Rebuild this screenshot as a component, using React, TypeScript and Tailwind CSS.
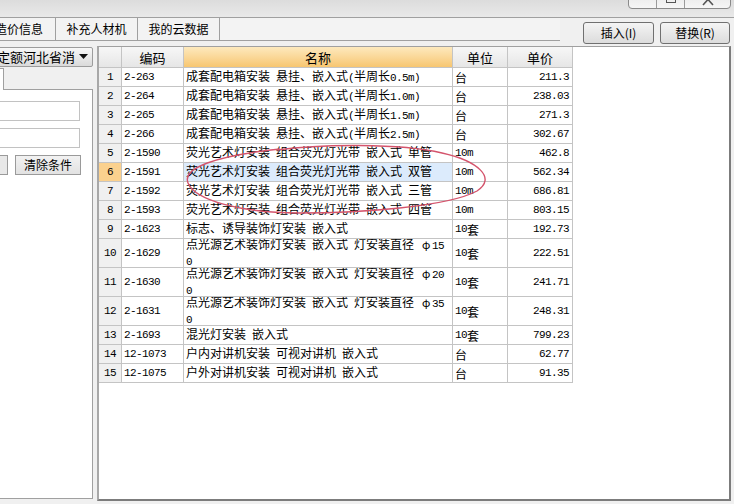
import React from "react";

type Row = {
  n: number;
  code: string;
  name: string[];
  unit: string;
  price: string;
};

const rows: Row[] = [
  { n: 1, code: "2-263", name: ["成套配电箱安装 悬挂、嵌入式(半周长0.5m)"], unit: "台", price: "211.3" },
  { n: 2, code: "2-264", name: ["成套配电箱安装 悬挂、嵌入式(半周长1.0m)"], unit: "台", price: "238.03" },
  { n: 3, code: "2-265", name: ["成套配电箱安装 悬挂、嵌入式(半周长1.5m)"], unit: "台", price: "271.3" },
  { n: 4, code: "2-266", name: ["成套配电箱安装 悬挂、嵌入式(半周长2.5m)"], unit: "台", price: "302.67" },
  { n: 5, code: "2-1590", name: ["荧光艺术灯安装 组合荧光灯光带 嵌入式 单管"], unit: "10m", price: "462.8" },
  { n: 6, code: "2-1591", name: ["荧光艺术灯安装 组合荧光灯光带 嵌入式 双管"], unit: "10m", price: "562.34" },
  { n: 7, code: "2-1592", name: ["荧光艺术灯安装 组合荧光灯光带 嵌入式 三管"], unit: "10m", price: "686.81" },
  { n: 8, code: "2-1593", name: ["荧光艺术灯安装 组合荧光灯光带 嵌入式 四管"], unit: "10m", price: "803.15" },
  { n: 9, code: "2-1623", name: ["标志、诱导装饰灯安装 嵌入式"], unit: "10套", price: "192.73" },
  { n: 10, code: "2-1629", name: ["点光源艺术装饰灯安装 嵌入式 灯安装直径 φ15", "0"], unit: "10套", price: "222.51" },
  { n: 11, code: "2-1630", name: ["点光源艺术装饰灯安装 嵌入式 灯安装直径 φ20", "0"], unit: "10套", price: "241.71" },
  { n: 12, code: "2-1631", name: ["点光源艺术装饰灯安装 嵌入式 灯安装直径 φ35", "0"], unit: "10套", price: "248.31" },
  { n: 13, code: "2-1693", name: ["混光灯安装 嵌入式"], unit: "10套", price: "799.23" },
  { n: 14, code: "12-1073", name: ["户内对讲机安装 可视对讲机 嵌入式"], unit: "台", price: "62.77" },
  { n: 15, code: "12-1075", name: ["户外对讲机安装 可视对讲机 嵌入式"], unit: "台", price: "91.35" },
];

const mono = "font-['Liberation_Mono',monospace] text-[11px] tracking-[-0.6px]";

// SimSun-like: half-width ascii at 6px, CJK at 12px
function Mixed({ text }: { text: string }) {
  const parts = text.split(/([\x20-\x7e]+|φ)/).filter(Boolean);
  return (
    <>
      {parts.map((p, i) =>
        p === "φ" ? (
          <span key={i} className="inline-block w-[12px] text-center text-[11px]">φ</span>
        ) : /^[\x20-\x7e]+$/.test(p) ? (
          <span key={i} className={`whitespace-pre ${mono}`}>{p}</span>
        ) : (
          <span key={i}>{p}</span>
        )
      )}
    </>
  );
}

function Grid() {
  const cell = "border-r border-b border-[#c4c4c4] flex items-center";
  const head = "h-[21px] border-r border-b border-[#c4c4c4] flex items-center justify-center text-[13px]";
  return (
    <div className="grid grid-cols-[23px_62px_269px_55px_65px] w-[474px] text-[12px] leading-[13px]">
      <div className={`${head} bg-gradient-to-b from-[#f7f7f7] to-[#e6e6e6]`}></div>
      <div className={`${head} bg-gradient-to-b from-[#f7f7f7] to-[#e6e6e6]`}>编码</div>
      <div className={`${head} bg-gradient-to-b from-[#fde9bd] to-[#f7c670]`}>名称</div>
      <div className={`${head} bg-gradient-to-b from-[#f7f7f7] to-[#e6e6e6]`}>单位</div>
      <div className={`${head} bg-gradient-to-b from-[#f7f7f7] to-[#e6e6e6]`}>单价</div>
      {rows.map((r) => {
        const h = r.name.length > 1 ? "h-[29px]" : "h-[19px]";
        const sel = r.n === 6;
        return (
          <React.Fragment key={r.n}>
            <div className={`${cell} ${h} justify-center ${mono} ${sel ? "bg-[#fbd18e]" : "bg-[#f0f0f0]"}`}>
              {r.n}
            </div>
            <div className={`${cell} ${h} pl-[2px] ${mono}`}>{r.code}</div>
            <div className={`${cell} ${h} pl-[2px] whitespace-nowrap overflow-hidden ${sel ? "bg-[#dcebfc]" : ""}`}>
              <div>
                {r.name.map((l, i) => (
                  <div key={i}>
                    <Mixed text={l} />
                  </div>
                ))}
              </div>
            </div>
            <div className={`${cell} ${h} pl-[2px]`}>
              <Mixed text={r.unit} />
            </div>
            <div className={`${cell} ${h} justify-end pr-[3px] ${mono}`}>{r.price}</div>
          </React.Fragment>
        );
      })}
    </div>
  );
}

export default function App() {
  return (
    <div className="relative w-[734px] h-[504px] overflow-hidden bg-[#f0f0f0] text-black font-['Noto_Sans_CJK_SC',sans-serif]">
      {/* window strip */}
      <div className="h-[18px] bg-gradient-to-b from-[#dcdcdc] to-[#e9e9e9] border-b border-[#a0a0a0]"></div>

      {/* window buttons */}
      <div className="absolute left-[628px] top-[-10px] w-[103px] h-[19px] flex border border-[#8a8a8a] rounded-b-[4px] overflow-hidden bg-gradient-to-b from-[#e6e6e6] to-[#f6f6f6]">
        <div className="w-[28px] border-r border-[#9a9a9a]"></div>
        <div className="w-[28px] border-r border-[#9a9a9a] flex justify-center">
          <div className="mt-[4px] w-[10px] h-[8px] border border-[#555] border-t-2"></div>
        </div>
        <div className="flex-1 flex justify-center">
          <svg width="16" height="17" viewBox="0 0 16 17">
            <path d="M3 3 L13 14 M13 3 L3 14" stroke="#555" strokeWidth="1.6" />
          </svg>
        </div>
      </div>

      {/* toolbar */}
      <div className="h-[28px] flex">
        <div className="flex h-[23px] w-[560px] border-b border-[#a0a0a0] text-[12px] bg-[#f3f3f3]">
          <div className="w-[56px] border-r border-[#a0a0a0] flex items-center overflow-hidden">
            <span className="ml-[-5px] whitespace-nowrap">造价信息</span>
          </div>
          <div className="w-[82px] border-r border-[#a0a0a0] flex items-center justify-center">补充人材机</div>
          <div className="w-[82px] border-r border-[#a0a0a0] flex items-center justify-center">我的云数据</div>
        </div>
        <div className="flex gap-[6px] ml-[23px] mt-[4px] text-[12px]">
          <button className="w-[71px] h-[22px] border border-[#707070] rounded-[3px] bg-gradient-to-b from-[#f4f4f4] to-[#dcdcdc] flex items-center justify-center">
            插入(I)
          </button>
          <button className="w-[70px] h-[22px] border border-[#707070] rounded-[3px] bg-gradient-to-b from-[#f4f4f4] to-[#dcdcdc] flex items-center justify-center">
            替换(R)
          </button>
        </div>
      </div>

      {/* main */}
      <div className="flex h-[458px]">
        <div className="w-[93px] flex flex-col pt-[1px]">
          <div className="h-[20px] w-[95px] ml-[-2px] border border-[#9c9c9c] rounded-[2px] bg-gradient-to-b from-[#f8f8f8] to-[#dadada] flex items-center overflow-hidden">
            <span className="flex-1 min-w-0 overflow-hidden whitespace-nowrap text-[13px] leading-[18px] ml-[-2px]">定额河北省消</span>
            <svg width="9" height="6" viewBox="0 0 9 6" className="mr-[4px] ml-[4px] shrink-0">
              <path d="M0 0 L9 0 L4.5 5 Z" fill="#111" />
            </svg>
          </div>
          <div className="h-[22px] mt-[1px] flex">
            <div className="w-[4px] bg-white border-r border-t border-[#a0a0a0]"></div>
            <div className="flex-1 border-b border-[#a0a0a0]"></div>
          </div>
          <div className="flex-1 mb-[5px] bg-white border-r border-b border-[#a0a0a0] pt-[11px] flex flex-col gap-[7px]">
            <div className="h-[20px] w-[82px] ml-[-2px] border border-[#c2c2c2] bg-white"></div>
            <div className="h-[20px] w-[82px] ml-[-2px] border border-[#c2c2c2] bg-white"></div>
            <div className="flex gap-[7px] h-[20px]">
              <div className="w-[10px] ml-[-2px] border border-[#9a9a9a] bg-[#e8e8e8]"></div>
              <button className="w-[66px] h-[20px] border border-[#9a9a9a] bg-gradient-to-b from-[#f2f2f2] to-[#e2e2e2] text-[12px] leading-[18px]">
                清除条件
              </button>
            </div>
          </div>
        </div>

        <div className="ml-[4px] w-[634px] h-[455px] bg-white border-t border-l-2 border-r-2 border-b-2 border-t-[#a0a0a0] border-l-[#a8a8a8] border-r-[#7c7c7c] border-b-[#7c7c7c] overflow-hidden">
          <Grid />
        </div>
      </div>

      {/* red annotation */}
      <svg className="absolute left-0 top-0 pointer-events-none" width="734" height="504" viewBox="0 0 734 504">
        <path
          d="M277 150 C320 144, 400 143, 442 153 C478 161, 497 178, 477 191 C447 207, 360 213, 300 213 C240 213, 195 200, 188 183 C182 168, 215 156, 280 149"
          fill="none"
          stroke="#d4546c"
          strokeWidth="1.4"
        />
      </svg>
    </div>
  );
}
